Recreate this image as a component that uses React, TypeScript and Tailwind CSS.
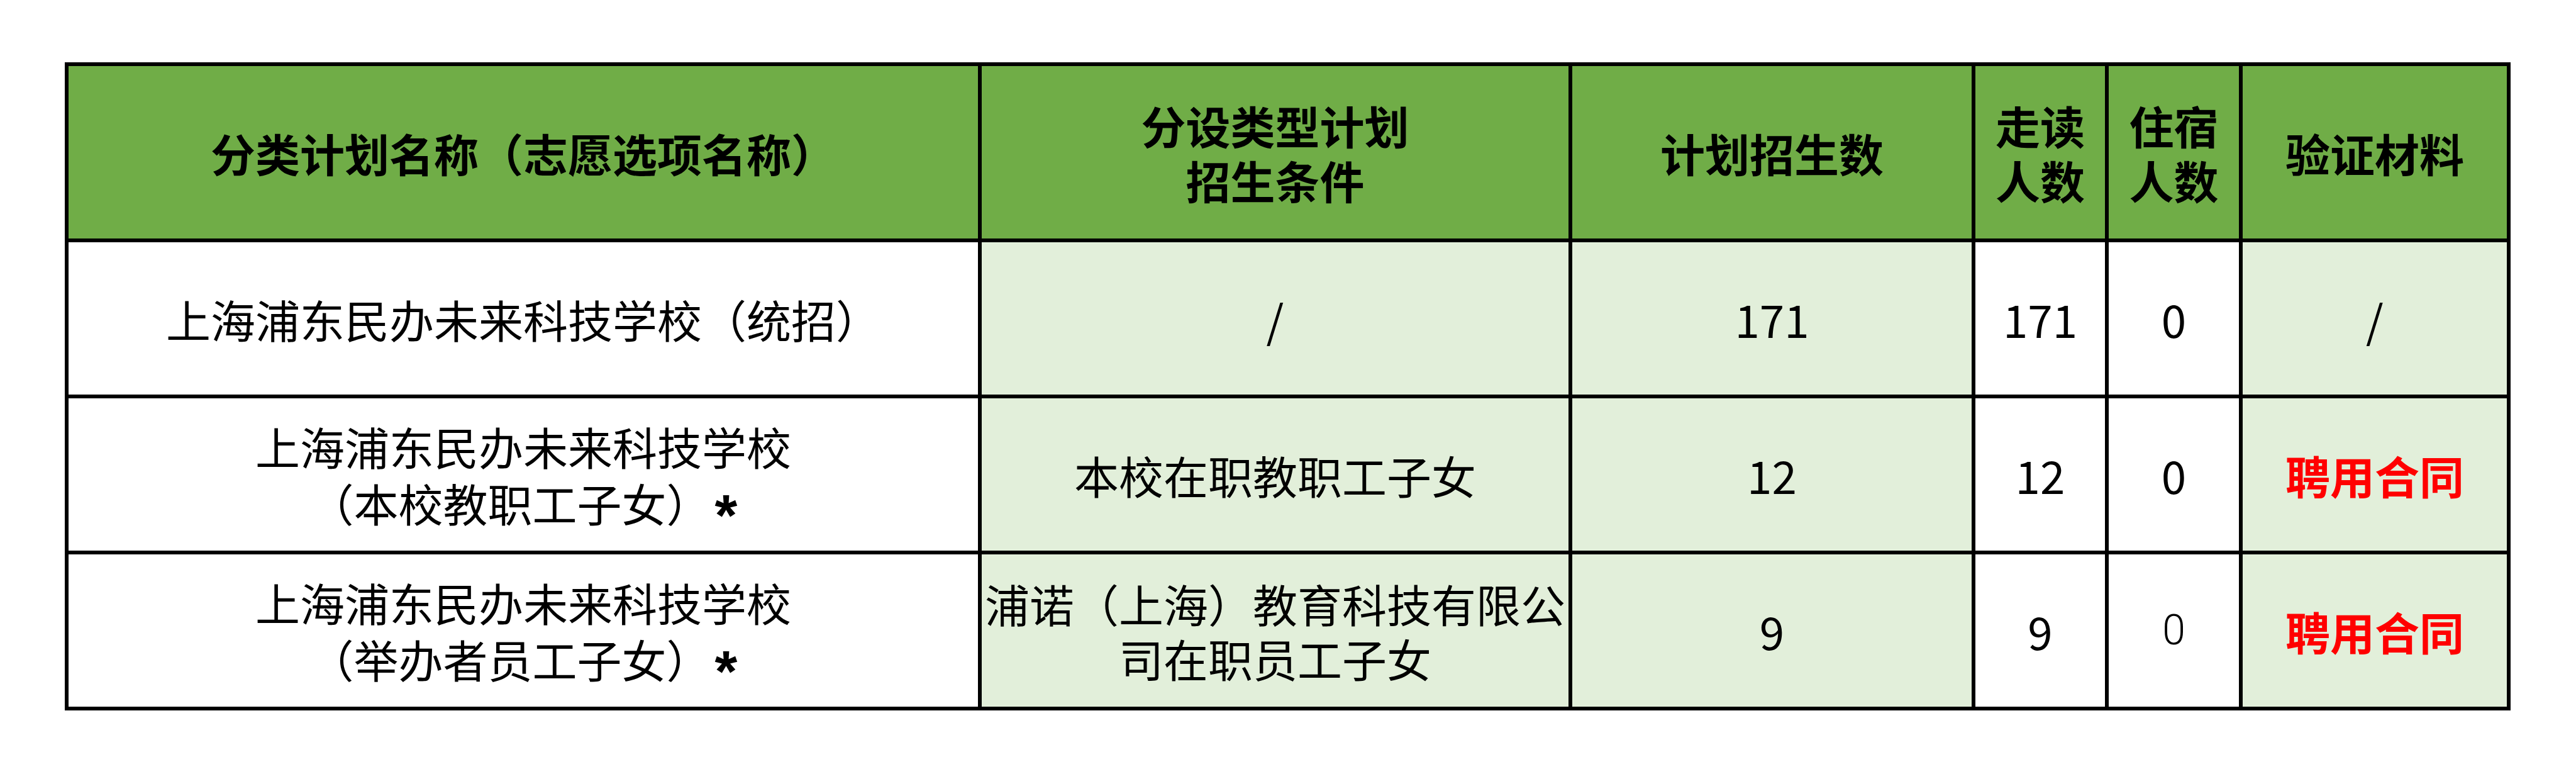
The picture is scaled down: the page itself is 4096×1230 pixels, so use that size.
import React from "react";

const cell = "flex items-center justify-center text-center leading-[1.22] whitespace-nowrap";
const white = "bg-white";
const light = "bg-[#E2EFDA]";
const head = "bg-[#70AD47] font-bold text-black";

function Star() {
  return (
    <span className="inline-block ml-[6px] translate-y-[22px] font-['Liberation_Sans',sans-serif] font-bold text-[92px] leading-none">
      *
    </span>
  );
}

function Row({
  name,
  cond,
  plan,
  walk,
  board,
  proof,
  thinZero,
}: {
  name: React.ReactNode;
  cond: React.ReactNode;
  plan: string;
  walk: string;
  board: string;
  proof: React.ReactNode;
  thinZero?: boolean;
}) {
  return (
    <>
      <div className={`${cell} ${white}`}>{name}</div>
      <div className={`${cell} ${light}`}>{cond}</div>
      <div className={`${cell} ${light}`}>{plan}</div>
      <div className={`${cell} ${white}`}>{walk}</div>
      <div className={`${cell} ${white}`}>
        {thinZero ? (
          <span className="font-['Roboto',sans-serif] font-light text-[66px]">{board}</span>
        ) : (
          board
        )}
      </div>
      <div className={`${cell} ${light}`}>{proof}</div>
    </>
  );
}

export default function App() {
  const red = <span className="font-bold text-[#FF0000]">聘用合同</span>;
  return (
    <div className="min-h-screen w-full bg-white pt-[99px] pl-[103px] font-['Noto_Sans_CJK_SC','Noto_Sans',sans-serif] text-[71px] text-black">
      <div className="w-[3889px] bg-black p-[6px]">
        <div className="grid grid-cols-[1446px_933px_635px_206px_207px_420px] grid-rows-[274px_242px_242px_242px] gap-[6px]">
          <div className={`${cell} ${head}`}>分类计划名称（志愿选项名称）</div>
          <div className={`${cell} ${head}`}>
            <div>
              <div>分设类型计划</div>
              <div>招生条件</div>
            </div>
          </div>
          <div className={`${cell} ${head}`}>计划招生数</div>
          <div className={`${cell} ${head}`}>
            <div>
              <div>走读</div>
              <div>人数</div>
            </div>
          </div>
          <div className={`${cell} ${head}`}>
            <div>
              <div>住宿</div>
              <div>人数</div>
            </div>
          </div>
          <div className={`${cell} ${head}`}>验证材料</div>

          <Row
            name="上海浦东民办未来科技学校（统招）"
            cond="/"
            plan="171"
            walk="171"
            board="0"
            proof="/"
          />
          <Row
            name={
              <div>
                <div>上海浦东民办未来科技学校</div>
                <div>
                  （本校教职工子女）
                  <Star />
                </div>
              </div>
            }
            cond="本校在职教职工子女"
            plan="12"
            walk="12"
            board="0"
            proof={red}
          />
          <Row
            name={
              <div>
                <div>上海浦东民办未来科技学校</div>
                <div>
                  （举办者员工子女）
                  <Star />
                </div>
              </div>
            }
            cond={
              <div>
                <div>浦诺（上海）教育科技有限公</div>
                <div>司在职员工子女</div>
              </div>
            }
            plan="9"
            walk="9"
            board="0"
            proof={red}
            thinZero
          />
        </div>
      </div>
    </div>
  );
}
